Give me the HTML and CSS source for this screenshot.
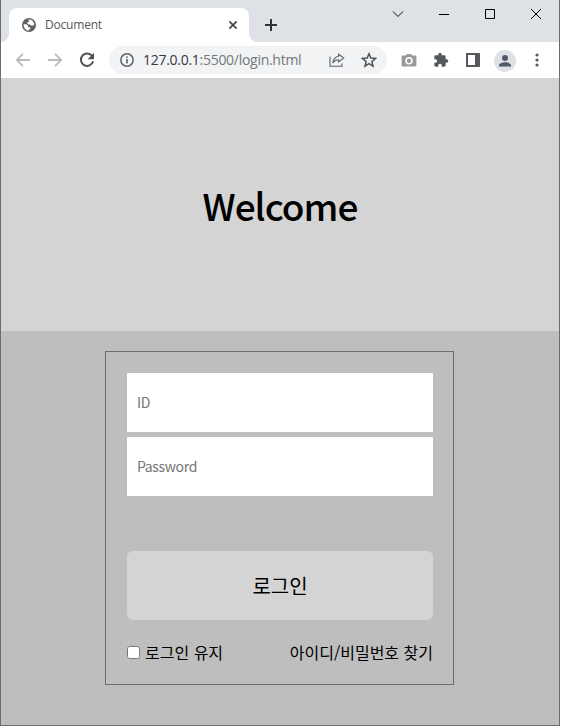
FILE: index.html
```html
<!DOCTYPE html>
<html lang="ko">
<head>
<meta charset="utf-8">
<title>Document</title>
<link rel="stylesheet" href="styles.css">
</head>
<body>
<div class="window">
  <header class="tabstrip">
    <div class="tab">
      <svg class="globe" width="14" height="14" viewBox="0 0 14 14"><circle cx="7" cy="7" r="7" fill="#5f6368"/><path d="M1.600 6.200H4.500L6.200 8v1.300h2v1.500L6.500 12.500C3.800 12.300 1.500 10 1.600 6.200zM6.300 1.600C9.500 1.300 12 3.500 12.300 6.500L11 7.600H9L8.200 6.400H6.400L5.300 5.300V4.200L7.300 3.500z" fill="#fff"/></svg>
      <span class="tab-title">Document</span>
      <svg class="tab-close" width="8" height="8" viewBox="0 0 8 8"><path d="M.4.4l7.200 7.200M7.600.4.4 7.600" stroke="#3c4043" stroke-width="1.600"/></svg>
    </div>
    <svg class="new-tab" width="12" height="12" viewBox="0 0 12 12"><path d="M6 0v12M0 6h12" stroke="#303236" stroke-width="2"/></svg>
    <div class="controls">
      <svg width="12" height="12" viewBox="0 0 12 12"><path d="M1 3.500l5 5 5-5" fill="none" stroke="#111" stroke-width="1"/></svg>
      <svg width="12" height="12" viewBox="0 0 12 12"><path d="M1 6.500h10" stroke="#000"/></svg>
      <svg width="12" height="12" viewBox="0 0 12 12"><path d="M1.500 1.500h9v9h-9z" fill="none" stroke="#000"/></svg>
      <svg width="12" height="12" viewBox="0 0 12 12"><path d="M1 1l10 10M11 1 1 11" stroke="#000"/></svg>
    </div>
  </header>
  <nav class="toolbar">
    <div class="nav-buttons">
      <svg width="16" height="16" viewBox="0 0 16 16"><path d="M15 8H2M8 1.800 1.800 8 8 14.200" fill="none" stroke="#babcbe" stroke-width="1.800"/></svg>
      <svg width="16" height="16" viewBox="0 0 16 16"><path d="M1 8h13M8 1.800 14.200 8 8 14.200" fill="none" stroke="#babcbe" stroke-width="1.800"/></svg>
      <svg width="16" height="16" viewBox="0 0 16 16"><path d="M13.300 4.300A6.200 6.200 0 1 0 14.100 9.200" fill="none" stroke="#505459" stroke-width="2"/><path d="M15 .8v6.400H8.600z" fill="#505459"/></svg>
    </div>
    <div class="address">
      <svg width="14" height="14" viewBox="0 0 14 14"><circle cx="7" cy="7" r="6.200" fill="none" stroke="#5f6368" stroke-width="1.500"/><path d="M7 6v4.500M7 3.500V5" stroke="#5f6368" stroke-width="1.600"/></svg>
      <span class="url"><b>127.0.0.1</b>:5500/login.html</span>
      <svg class="share" width="16" height="14" viewBox="0 0 16 14"><path d="M1 3.500v9.800h12V10.500M9.500 1.200 14.800 5 9.500 9V6.800C7 6.800 5.300 7.700 3.700 10 4.300 6.300 6.200 3.800 9.500 3.300z" fill="none" stroke="#5f6368" stroke-width="1.100"/></svg>
      <svg class="star" width="16" height="16" viewBox="0 0 16 16"><path d="M8 1.800l1.800 4.300 4.700.4-3.600 3.100 1.100 4.600-4-2.500-4 2.500 1.100-4.600L1.500 6.500l4.700-.4z" fill="none" stroke="#505459" stroke-width="1.500"/></svg>
    </div>
    <div class="extensions">
      <svg width="16" height="16" viewBox="0 0 16 16"><path fill-rule="evenodd" d="M1.800 3.500h2.900L5.800 2h4.400l1.100 1.500h2.900c.7 0 1.200.5 1.200 1.200v8.600c0 .7-.5 1.200-1.200 1.200H1.800c-.7 0-1.200-.5-1.200-1.200V4.700c0-.7.5-1.200 1.200-1.200zM8 5a3.800 3.800 0 1 0 0 7.600A3.800 3.800 0 0 0 8 5z" fill="#999"/><circle cx="8" cy="8.800" r="2.200" fill="#999"/></svg>
      <svg width="16" height="16" viewBox="0 0 24 24"><path d="M20.500 11H19V7c0-1.100-.9-2-2-2h-4V3.500a2.500 2.500 0 0 0-5 0V5H4c-1.100 0-2 .9-2 2v3.800h1.500a2.700 2.700 0 0 1 0 5.400H2V20c0 1.100.9 2 2 2h3.800v-1.500a2.700 2.700 0 0 1 5.400 0V22H17c1.100 0 2-.9 2-2v-4h1.500a2.500 2.500 0 0 0 0-5z" fill="#55595e"/></svg>
      <svg width="16" height="16" viewBox="0 0 16 16"><path fill-rule="evenodd" d="M1 1h14v14H1zM3 3v10h7V3z" fill="#55595e"/></svg>
      <svg class="avatar" width="22" height="22" viewBox="0 0 22 22"><circle cx="11" cy="11" r="11" fill="#dee1e6"/><circle cx="11" cy="8" r="3" fill="#505967"/><path d="M5 16.500v-1.300c0-2 4-3 6-3s6 1 6 3v1.300z" fill="#505967"/></svg>
      <svg width="16" height="16" viewBox="0 0 16 16" fill="#55595e"><circle cx="8" cy="3" r="1.600"/><circle cx="8" cy="8" r="1.600"/><circle cx="8" cy="13" r="1.600"/></svg>
    </div>
  </nav>
  <section class="hero"><h1>Welcome</h1></section>
  <main class="content">
    <form class="login">
      <input class="field" type="text" placeholder="ID">
      <input class="field" type="password" placeholder="Password">
      <button class="submit" type="button">로그인</button>
      <div class="options">
        <label><input type="checkbox">로그인 유지</label>
        <span>아이디/비밀번호 찾기</span>
      </div>
    </form>
  </main>
</div>
</body>
</html>
```
FILE: styles.css
```css
* { box-sizing: border-box; }
body { margin: 0; background: #fff; overflow: hidden; }
svg { display: block; flex: none; }
.window {
  width: 560px; height: 726px;
  display: flex; flex-direction: column;
  border: 1px solid #6b6c6e; border-top: 0;
  font-family: "Noto Sans CJK KR", sans-serif;
}
.tabstrip { height: 42px; flex: none; display: flex; background: #dee1e6; }
.tab {
  position: relative;
  width: 240px; height: 34px; margin: 8px 0 0 8px; padding: 0 12px 0 13px;
  display: flex; align-items: center;
  background: #fff; border-radius: 8px 8px 0 0;
}
.tab::before, .tab::after {
  content: ""; position: absolute; bottom: 0; width: 8px; height: 8px;
}
.tab::before { left: -8px; background: radial-gradient(circle at 0 0, transparent 7.5px, #fff 8px); }
.tab::after { right: -8px; background: radial-gradient(circle at 100% 0, transparent 7.5px, #fff 8px); }
.tab-title { margin-left: 9px; font: 12px/16px "Open Sans", sans-serif; color: #54585c; letter-spacing: -0.2px; }
.tab-close { margin-left: auto; }
.new-tab { margin: 19px 0 0 16px; }
.controls { display: flex; gap: 34px; margin: 8px 17px 0 auto; }
.toolbar { height: 36px; flex: none; display: flex; align-items: center; background: #fff; }
.nav-buttons { display: flex; gap: 16px; margin-left: 14px; }
.address {
  width: 278px; height: 28px; margin-left: 14px; padding: 0 10px 0 11px;
  display: flex; align-items: center;
  background: #f1f3f4; border-radius: 14px;
}
.url { margin-left: 9px; font: 14px/20px "Open Sans", sans-serif; color: #74787c; white-space: nowrap; letter-spacing: -0.28px; }
.url b { font-weight: 400; color: #36383b; }
.share { margin-left: auto; }
.star { margin-left: 16px; }
.extensions { display: flex; align-items: center; gap: 16px; padding-left: 14px; }
.avatar { margin: 0 -3px -1px -3px; }
.avatar + svg { margin-left: 0; }
.hero { height: 253px; flex: none; display: flex; align-items: center; justify-content: center; background: #d4d4d4; }
h1 { margin: 1px 0 0; font-size: 37px; line-height: 54px; font-weight: 500; letter-spacing: -1px; color: #000; }
.content { flex: 1; padding: 20px 105px 40px 104px; background: #bebebe; }
.login {
  height: 334px; padding: 21px 20px 0 21px;
  display: flex; flex-direction: column;
  border: 1px solid #6c6c6c;
}
.field {
  height: 59px; flex: none; margin: 0 0 5px; padding: 0 10px 2px;
  border: 0; background: #fff; font: 14px "Noto Sans CJK KR", sans-serif; letter-spacing: -0.35px;
}
.field::placeholder { color: #757575; }
.submit {
  height: 69px; flex: none; margin-top: 50px; padding: 0;
  border: 0; border-radius: 6px; background: #d4d4d4; color: #000;
  font: 20px "Noto Sans CJK KR", sans-serif;
}
.options {
  display: flex; justify-content: space-between; align-items: center;
  margin-top: 20px; font-size: 16px; line-height: 24px; color: #000;
}
.options label { display: flex; align-items: center; }
.options input { width: 13px; height: 13px; margin: 0 5px 0 0; }
```
